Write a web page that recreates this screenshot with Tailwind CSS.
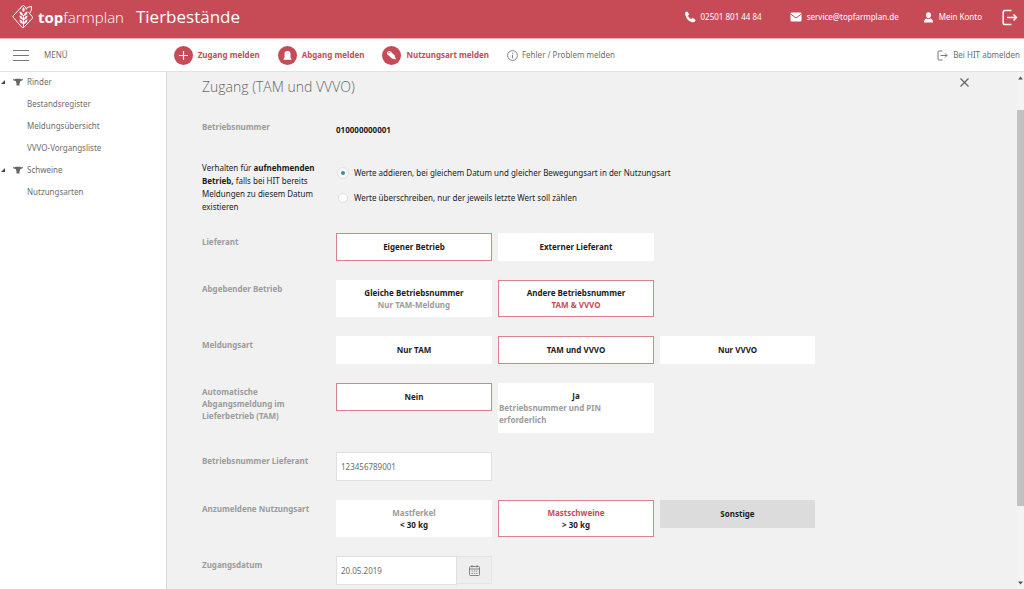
<!DOCTYPE html>
<html lang="de">
<head>
<meta charset="utf-8">
<meta name="viewport" content="width=device-width, initial-scale=1">
<title>topfarmplan Tierbestände</title>
<script src="https://cdn.jsdelivr.net/npm/@tailwindcss/browser@4"></script>
</head>
<body class="flex h-screen flex-col overflow-hidden bg-[#f1f1f1] font-['Noto_Sans','Open_Sans',sans-serif] text-[8px] leading-[12px] text-[#6e6e6e]">

<header class="flex h-[39px] shrink-0 items-center border-b border-[#eeb0ba] bg-[#c64b57] pr-[6px] pb-1 pl-3 text-white">
  <a href="#" class="flex items-center gap-1">
    <svg class="h-6 w-[22px]" viewBox="0 0 22 24" fill="none" stroke="#fff" stroke-width="1">
      <path d="M8 3.500 1.500 10.500a1.500 1.500 0 0 0 0 2.200L10 22.300q1 1 2 0l8-8.500q1-1.200 0-2.500l-3.500-4"/>
      <path d="M11.500 23V10M8 4q.5-2.500 3.500-3.500Q14 2 14.500 4.500M14 3.500q2.500-2 5.500-2 .6 4-2 7"/>
      <path d="M11.500 7q-2.500-2 0-5 2.500 3 0 5ZM11 11Q7.500 10 7.500 6.500q3.500.8 3.500 4.500ZM11 15Q7.500 14 7.500 10.500q3.500.8 3.500 4.500ZM11 19Q7.500 18 7.500 14.500q3.500.8 3.500 4.500ZM12 11q3.500-1 3.500-4.500-3.500.8-3.500 4.500ZM12 15q3.500-1 3.500-4.500-3.500.8-3.500 4.500ZM12 19q3.500-1 3.500-4.500-3.500.8-3.500 4.500Z" fill="#fff" stroke="none"/>
    </svg>
    <span class="font-['Open_Sans',sans-serif] text-[15px] leading-5"><b>top</b><span class="font-light">farmplan</span></span>
  </a>
  <h1 class="ml-3 font-['Open_Sans',sans-serif] text-[17px] leading-6">Tierbestände</h1>
  <nav class="ml-auto flex items-center">
    <a href="#" class="flex items-center gap-[5px]">
      <svg class="size-3" viewBox="0 0 12 12" fill="#fff"><path d="M1.500 1 3.300.4l2 3-1.300 1.300c.5 1.500 1.700 2.700 3.200 3.400L8.600 6.800l3 2.100-.7 1.900C7 13 0 7 1.500 1Z"/></svg>
      02501 801 44 84</a>
    <a href="#" class="ml-7 flex items-center gap-[5px]">
      <svg class="h-[10px] w-3" viewBox="0 0 12 10"><rect x=".5" y=".5" width="11" height="9" rx="1" fill="#fff"/><path d="m.5 2 5.500 4 5.500-4" fill="none" stroke="#c64b57"/></svg>
      service@topfarmplan.de</a>
    <a href="#" class="ml-6 flex items-center gap-[5px]">
      <svg class="size-[11px]" viewBox="0 0 11 11" fill="#fff"><path d="M5.500.3C3.800.3 3 1.500 3 3s.8 3.200 2.500 3.200S8 4.500 8 3 7.200.3 5.500.3ZM1 10.500C1 8 1.800 7 3.500 6.500q2 1 4 0C9.200 7 10 8 10 10.500Z"/></svg>
      Mein Konto</a>
    <a href="#" aria-label="Abmelden" class="ml-5">
      <svg class="h-[17px] w-4" viewBox="0 0 16 17" fill="none" stroke="#fff" stroke-width="1.500"><path d="M9.500 1.500H3Q1.200 1.500 1.200 3.300v10.400Q1.200 15.500 3 15.500h6.500M5 8.500h9.500M11.500 5.500l3 3-3 3"/></svg>
    </a>
  </nav>
</header>

<div class="flex h-[33px] shrink-0 items-center border-b border-[#e2e2e2] bg-white pr-1 pl-[13px]">
  <button class="flex items-center gap-[15px]">
    <svg class="h-[11px] w-4" viewBox="0 0 16 11" stroke="#777"><path d="M0 .5h16M0 5.500h16M0 10.500h16"/></svg>
    MENÜ</button>
  <nav class="ml-[106px] flex items-center gap-[18px] font-bold text-[#c64b57]">
    <button class="flex items-center gap-[5px]">
      <svg class="size-[19px]" viewBox="0 0 19 19"><circle cx="9.500" cy="9.500" r="9.500" fill="#c64b57"/><path d="M9.500 5v9M5 9.500h9" stroke="#fff" stroke-width="1.200"/></svg>
      Zugang melden</button>
    <button class="flex items-center gap-[5px]">
      <svg class="size-[19px]" viewBox="0 0 19 19"><circle cx="9.500" cy="9.500" r="9.500" fill="#c64b57"/><path d="M6.500 11.500V7.500q0-2.500 3-2.500t3 2.500v4l1 1.500v.8h-8V13Z" fill="#fff"/><path d="M8 7.800h3" stroke="#e9b0b6" stroke-width=".6"/></svg>
      Abgang melden</button>
    <button class="flex items-center gap-[5px]">
      <svg class="size-[19px]" viewBox="0 0 19 19"><circle cx="9.500" cy="9.500" r="9.500" fill="#c64b57"/><path d="M5 6.500q1-2 3-1.500l4.500 4.300 1.500 4.200-4-1L5.500 8.500Z" fill="#fff"/><circle cx="7" cy="6.800" r=".7" fill="#c64b57"/></svg>
      Nutzungsart melden</button>
  </nav>
  <button class="ml-[18px] flex items-center gap-1">
    <svg class="size-[11px]" viewBox="0 0 11 11" fill="none" stroke="#777" stroke-width=".9"><circle cx="5.500" cy="5.500" r="4.900"/><path d="M5.500 4.800V8.300M5.500 2.700v1.100"/></svg>
    Fehler / Problem melden</button>
  <button class="ml-auto flex items-center gap-[5px]">
    <svg class="h-[11px] w-[11px]" viewBox="0 0 11 11" fill="none" stroke="#777"><path d="M5.500 1H2Q1 1 1 2v7q0 1 1 1h3.500M3.500 5.500H10M8 3.500l2 2-2 2"/></svg>
    Bei HIT abmelden</button>
</div>

<div class="flex min-h-0 flex-1">
  <aside class="w-[167px] shrink-0 overflow-hidden border-r border-[#d8d8d8] bg-white leading-[22px]">
    <ul class="-mt-px">
      <li>
        <a href="#" class="flex items-center">
          <svg class="ml-px size-1" viewBox="0 0 4 4" fill="#444"><path d="M4 0v4H0Z"/></svg>
          <svg class="mr-1 ml-2 h-2 w-[10px]" viewBox="0 0 10 8" fill="#666"><path d="M0 .8q1.500 1 2.500 0h5q1 1 2.500 0Q10 3 7.300 3L6.500 5.500v2h-3v-2L2.700 3Q0 3 0 .8Z"/></svg>
          Rinder</a>
        <ul class="pl-[27px]">
          <li><a href="#">Bestandsregister</a></li>
          <li><a href="#">Meldungsübersicht</a></li>
          <li><a href="#">VVVO-Vorgangsliste</a></li>
        </ul>
      </li>
      <li>
        <a href="#" class="flex items-center">
          <svg class="ml-px size-1" viewBox="0 0 4 4" fill="#444"><path d="M4 0v4H0Z"/></svg>
          <svg class="mr-1 ml-2 h-2 w-[10px]" viewBox="0 0 10 8" fill="#666"><path d="M0 .8q1.500 1 2.500 0h5q1 1 2.500 0Q10 3 7.300 3L6.500 5.500v2h-3v-2L2.700 3Q0 3 0 .8Z"/></svg>
          Schweine</a>
        <ul class="pl-[27px]"><li><a href="#">Nutzungsarten</a></li></ul>
      </li>
    </ul>
  </aside>

  <main class="min-w-0 flex-1 overflow-hidden pl-[35px]">
    <div class="flex items-start justify-between pt-1 pr-12">
      <h2 class="font-['Open_Sans',sans-serif] text-[14px] leading-[22px] font-light text-[#666]">Zugang (TAM und VVVO)</h2>
      <button aria-label="Schließen" class="mt-[2px]">
        <svg class="size-[9px]" viewBox="0 0 9 9" stroke="#666" stroke-width="1.300"><path d="m.5.5 8 8M8.500.5l-8 8"/></svg>
      </button>
    </div>

    <form class="mt-[23px] flex flex-col gap-[19px] text-[#1c1c1c]">
      <div class="grid grid-cols-[120px_1fr] gap-x-[14px]">
        <span class="font-bold text-[#9c9c9c]">Betriebsnummer</span>
        <b class="pt-[3px]">010000000001</b>
      </div>

      <fieldset class="mt-[6px] grid grid-cols-[120px_1fr] gap-x-[14px]">
        <div id="verhalten" class="leading-[13px]">Verhalten für <b>aufnehmenden Betrieb,</b> falls bei HIT bereits Meldungen zu diesem Datum existieren</div>
        <div role="radiogroup" aria-labelledby="verhalten" class="flex flex-col gap-[13px] pt-[6px] pl-[2px]">
          <label class="flex items-center gap-[6px]"><input type="radio" name="modus" checked class="size-[10px] appearance-none rounded-full border border-[#ddd] bg-white checked:border-[3px] checked:border-[#f8f8f8] checked:bg-[#2f95a0] checked:outline checked:outline-[#e2e2e2]">Werte addieren, bei gleichem Datum und gleicher Bewegungsart in der Nutzungsart</label>
          <label class="flex items-center gap-[6px]"><input type="radio" name="modus" class="size-[10px] appearance-none rounded-full border border-[#ddd] bg-white">Werte überschreiben, nur der jeweils letzte Wert soll zählen</label>
        </div>
      </fieldset>

      <div class="mt-px grid grid-cols-[128px_156px_156px_155px] items-start gap-x-[6px] font-bold">
        <span class="pt-[3px] text-[#9c9c9c]">Lieferant</span>
        <button type="button" class="h-7 border border-[#dc8089] bg-white">Eigener Betrieb</button>
        <button type="button" class="h-7 bg-white">Externer Lieferant</button>
      </div>

      <div class="grid grid-cols-[128px_156px_156px_155px] items-start gap-x-[6px] font-bold">
        <span class="pt-[3px] text-[#9c9c9c]">Abgebender Betrieb</span>
        <button type="button" class="h-[37px] bg-white">Gleiche Betriebsnummer<br><span class="text-[#9c9c9c]">Nur TAM-Meldung</span></button>
        <button type="button" class="h-[37px] border border-[#dc8089] bg-white">Andere Betriebsnummer<br><span class="text-[#c64b57]">TAM &amp; VVVO</span></button>
      </div>

      <div class="grid grid-cols-[128px_156px_156px_155px] items-start gap-x-[6px] font-bold">
        <span class="pt-[3px] text-[#9c9c9c]">Meldungsart</span>
        <button type="button" class="h-7 bg-white">Nur TAM</button>
        <button type="button" class="h-7 border border-[#dc8089] bg-white">TAM und VVVO</button>
        <button type="button" class="h-7 bg-white">Nur VVVO</button>
      </div>

      <div class="grid grid-cols-[128px_156px_156px_155px] items-start gap-x-[6px] font-bold">
        <span class="pt-[3px] pr-5 text-[#9c9c9c]">Automatische Abgangsmeldung im Lieferbetrieb (TAM)</span>
        <button type="button" class="h-7 border border-[#dc8089] bg-white">Nein</button>
        <button type="button" class="h-[50px] bg-white px-px">Ja<span class="block pr-10 text-left text-[#9c9c9c]">Betriebsnummer und PIN erforderlich</span></button>
      </div>

      <div class="grid grid-cols-[128px_156px_156px_155px] items-start gap-x-[6px] font-bold">
        <label for="lieferant" class="pt-[3px] whitespace-nowrap text-[#9c9c9c]">Betriebsnummer Lieferant</label>
        <input id="lieferant" type="text" value="123456789001" class="h-[29px] w-full border border-[#e0e0e0] bg-white px-1 font-normal text-[#6e6e6e]">
      </div>

      <div class="grid grid-cols-[128px_156px_156px_155px] items-start gap-x-[6px] font-bold">
        <span class="pt-[3px] whitespace-nowrap text-[#9c9c9c]">Anzumeldene Nutzungsart</span>
        <button type="button" class="h-[37px] bg-white"><span class="text-[#9c9c9c]">Mastferkel</span><br>&lt; 30 kg</button>
        <button type="button" class="h-[37px] border border-[#dc8089] bg-white"><span class="text-[#c64b57]">Mastschweine</span><br>&gt; 30 kg</button>
        <button type="button" class="h-7 bg-[#dcdcdc]">Sonstige</button>
      </div>

      <div class="grid grid-cols-[128px_156px_156px_155px] items-start gap-x-[6px] font-bold">
        <label for="datum" class="pt-[3px] text-[#9c9c9c]">Zugangsdatum</label>
        <div class="flex">
          <input id="datum" type="text" value="20.05.2019" class="h-[29px] min-w-0 flex-1 border border-[#e0e0e0] bg-white px-1 font-normal text-[#6e6e6e]">
          <button type="button" aria-label="Kalender" class="flex h-7 w-[35px] items-center justify-center border border-l-0 border-[#e4e4e4] bg-[#eee]">
            <svg class="size-[11px]" viewBox="0 0 11 11" fill="none" stroke="#777" stroke-width=".9"><rect x=".5" y="1.500" width="10" height="9" rx="1"/><path d="M.5 4h10M3 0v2.500M8 0v2.500"/><path d="M2.500 6h6M2.500 8.300h6" stroke-dasharray="1.400 .9"/></svg>
          </button>
        </div>
      </div>
    </form>
  </main>

  <div class="flex w-[7px] shrink-0 flex-col items-center bg-[#f3f3f3] py-1" aria-hidden="true">
    <svg class="h-1 w-[5px] shrink-0" viewBox="0 0 5 4" fill="#555"><path d="M0 3.500 2.500.5 5 3.500Z"/></svg>
    <div class="mt-[30px] w-full flex-[396] bg-[#c1c1c1]"></div>
    <div class="flex-[75]"></div>
    <svg class="h-1 w-[5px] shrink-0" viewBox="0 0 5 4" fill="#555"><path d="M0 .5h5L2.500 3.500Z"/></svg>
  </div>
</div>
</body>
</html>
